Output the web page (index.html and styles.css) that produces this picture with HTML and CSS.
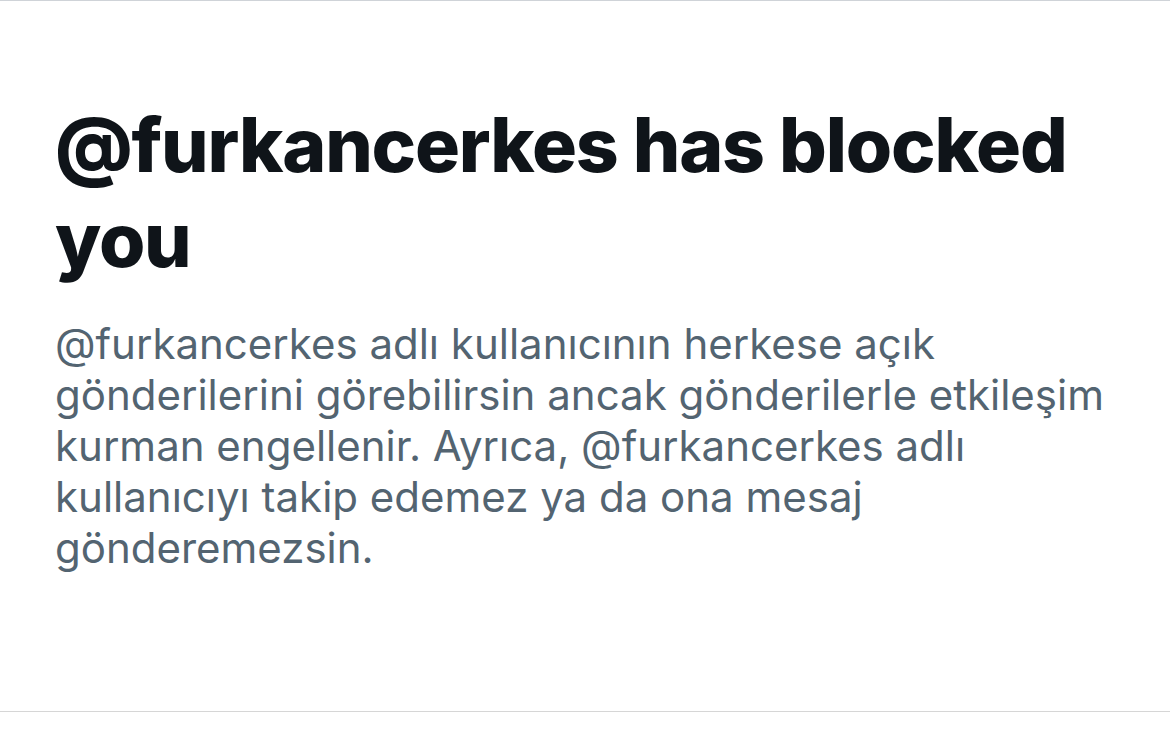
FILE: index.html
```html
<!DOCTYPE html>
<html lang="tr">
<head>
<meta charset="utf-8">
<title>Blocked</title>
<link rel="stylesheet" href="styles.css">
</head>
<body>
<main class="panel">
  <div class="empty-state">
    <h1 class="title">@furkancerkes has blocked you</h1>
    <p class="desc">@furkancerkes adlı kullanıcının herkese açık gönderilerini görebilirsin ancak gönderilerle etkileşim kurman engellenir. Ayrıca, @furkancerkes adlı kullanıcıyı takip edemez ya da ona mesaj gönderemezsin.</p>
  </div>
</main>
</body>
</html>
```
FILE: styles.css
```css
html, body {
  margin: 0;
  padding: 0;
  background: #ffffff;
}
body {
  font-family: Inter, "Noto Sans", "Liberation Sans", sans-serif;
}
.panel {
  height: 710px;
  border-top: 1px solid #cfd3d8;
  border-bottom: 1px solid #d6d6d6;
  box-sizing: content-box;
}
.empty-state {
  padding: 96px 35px 0 55px;
}
.title {
  margin: 0;
  font-size: 75px;
  line-height: 95px;
  font-weight: 800;
  color: #0f1419;
  letter-spacing: -1.2px;
}
.desc {
  margin: 31px 0 0 0;
  font-size: 42px;
  line-height: 51px;
  font-weight: 400;
  color: #536471;
}
```
